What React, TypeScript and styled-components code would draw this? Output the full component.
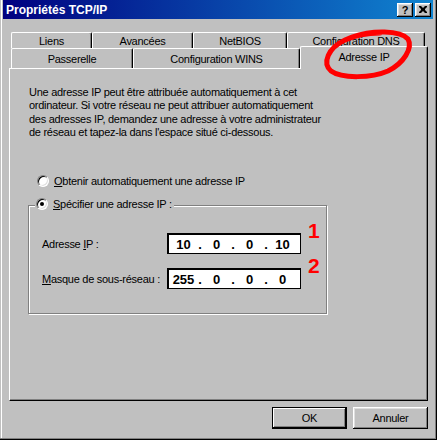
import React from 'react';
import styled, { createGlobalStyle } from 'styled-components';

const backTabs = [
  { label: 'Liens', w: 81 },
  { label: 'Avancées', w: 101 },
  { label: 'NetBIOS', w: 94 },
  { label: 'Configuration DNS', w: 138 },
];

const frontTabs = [
  { label: 'Passerelle', w: 122 },
  { label: 'Configuration WINS', w: 167 },
  { label: 'Adresse IP', w: 128, selected: true },
];

const fields = [
  { key: 'ip', label: 'Adresse ', mnemonic: 'I', rest: 'P :', parts: ['10', '0', '0', '10'], marker: '1' },
  { key: 'mask', label: '', mnemonic: 'M', rest: 'asque de sous-réseau :', parts: ['255', '0', '0', '0'], marker: '2' },
];

const App: React.FC = () => {
  return (
    <>
      <GlobalStyle />
      <Window>
        <TitleBar>
          <TitleText>Propriétés TCP/IP</TitleText>
          <CaptionButtons>
            <CaptionButton>?</CaptionButton>
            <CaptionButton>
              <svg width='8' height='7' viewBox='0 0 8 7'>
                <path d='M0 0h2l2 2 2-2h2v1l-2 2v1l2 2v1h-2l-2-2-2 2h-2v-1l2-2v-1l-2-2z' fill='#000' />
              </svg>
            </CaptionButton>
          </CaptionButtons>
        </TitleBar>

        <Body>
          <TabStrip>
            <BackRow>
              {backTabs.map((tab) => (
                <Tab key={tab.label} $w={tab.w}>
                  {tab.label}
                </Tab>
              ))}
            </BackRow>
            <FrontRow>
              {frontTabs.map((tab) =>
                tab.selected ? (
                  <SelectedTab key={tab.label} $w={tab.w}>
                    {tab.label}
                  </SelectedTab>
                ) : (
                  <FrontTab key={tab.label} $w={tab.w}>
                    {tab.label}
                  </FrontTab>
                ),
              )}
            </FrontRow>
          </TabStrip>

          <Panel>
            <Description>
              Une adresse IP peut être attribuée automatiquement à cet
              <br />
              ordinateur. Si votre réseau ne peut attribuer automatiquement
              <br />
              des adresses IP, demandez une adresse à votre administrateur
              <br />
              de réseau et tapez-la dans l'espace situé ci-dessous.
            </Description>

            <RadioRow>
              <Radio />
              <span>
                <u>O</u>btenir automatiquement une adresse IP
              </span>
            </RadioRow>

            <GroupBox>
              <Legend>
                <Radio $checked />
                <span>
                  <u>S</u>pécifier une adresse IP :
                </span>
              </Legend>
              <Fields>
                {fields.map((f) => (
                  <FieldRow key={f.key}>
                    <span>
                      {f.label}
                      <u>{f.mnemonic}</u>
                      {f.rest}
                    </span>
                    <IpBox>
                      {f.parts.map((p, i) => (
                        <React.Fragment key={i}>
                          {i > 0 && <IpDot>.</IpDot>}
                          <IpPart>{p}</IpPart>
                        </React.Fragment>
                      ))}
                    </IpBox>
                    <Marker>{f.marker}</Marker>
                  </FieldRow>
                ))}
              </Fields>
            </GroupBox>
          </Panel>

          <ButtonRow>
            <DialogButton $default>OK</DialogButton>
            <DialogButton>Annuler</DialogButton>
          </ButtonRow>
        </Body>

        {/* red hand-drawn loop around the selected tab */}
        <Scribble width='100' height='60' viewBox='318 26 100 60'>
          <path
            d='M352 37 C372 30 400 30 408 39 C413 48 404 63 388 71 C372 78 342 79 331 71 C322 63 328 48 345 40 C356 35 370 33 380 33'
            fill='none'
            stroke='#ff0000'
            strokeWidth='5'
            strokeLinecap='round'
          />
        </Scribble>
      </Window>
    </>
  );
};

export default App;

const GlobalStyle = createGlobalStyle`
  html, body {
    margin: 0;
    padding: 0;
    background: #c0c0c0;
  }
  body {
    font-family: "Liberation Sans", Arial, sans-serif;
    font-size: 11px;
    letter-spacing: -0.27px;
    color: #000;
  }
`;

const Window = styled.div`
  position: relative;
  width: 437px;
  height: 440px;
  box-sizing: border-box;
  padding: 0 4px 0 3px;
  background: #c0c0c0;
  overflow: hidden;
  box-shadow:
    inset -1px -1px #000,
    inset -2px -2px #808080,
    inset 1px 0 #c0c0c0,
    inset 2px 0 #fff;
`;

const TitleBar = styled.div`
  display: flex;
  align-items: center;
  height: 19px;
  padding: 0 2px 0 3px;
  background: linear-gradient(to right, #000080, #1084d0);
  color: #fff;
`;

const TitleText = styled.span`
  font-weight: bold;
  font-size: 12px;
  letter-spacing: 0;
`;

const CaptionButtons = styled.div`
  display: flex;
  gap: 2px;
  margin-left: auto;
`;

const CaptionButton = styled.div`
  display: flex;
  align-items: center;
  justify-content: center;
  width: 16px;
  height: 14px;
  box-sizing: border-box;
  background: #c0c0c0;
  color: #000;
  font-weight: bold;
  font-size: 11px;
  box-shadow:
    inset -1px -1px #000,
    inset 1px 1px #fff,
    inset -2px -2px #808080,
    inset 2px 2px #dfdfdf;
`;

const Body = styled.div`
  margin: 0 5px 0 6px;
`;

const TabStrip = styled.div`
  margin-top: 13px;
  padding-left: 2px;
`;

const BackRow = styled.div`
  display: flex;
  height: 16px;
`;

const FrontRow = styled.div`
  display: flex;
  align-items: flex-end;
  height: 20px;
`;

const Tab = styled.div<{ $w: number }>`
  display: flex;
  align-items: center;
  justify-content: center;
  width: ${(p) => p.$w}px;
  height: 16px;
  box-sizing: border-box;
  background: #c0c0c0;
  border-top: 1px solid #fff;
  border-left: 1px solid #fff;
  border-right: 1px solid #000;
  border-radius: 2px 2px 0 0;
  box-shadow: inset -1px 0 #808080;
`;

const FrontTab = styled(Tab)`
  height: 20px;
`;

const SelectedTab = styled(Tab)`
  position: relative;
  z-index: 1;
  height: 23px;
  margin-bottom: -1px;
  padding-bottom: 2px;
`;

const Panel = styled.div`
  height: 333px;
  box-sizing: border-box;
  padding: 17px 0 0 19px;
  border-top: 1px solid #fff;
  border-left: 1px solid #fff;
  border-right: 1px solid #000;
  border-bottom: 1px solid #000;
  box-shadow: inset -1px -1px #808080;
`;

const Description = styled.p`
  margin: 0;
  line-height: 13.3px;
  white-space: nowrap;
`;

const RadioRow = styled.div`
  display: flex;
  align-items: center;
  gap: 5px;
  height: 16px;
  margin: 34px 0 0 8px;
`;

const Radio = styled.span<{ $checked?: boolean }>`
  position: relative;
  flex: none;
  display: inline-block;
  width: 12px;
  height: 12px;
  box-sizing: border-box;
  border-radius: 50%;
  background: #fff;
  border: 1px solid;
  border-color: #808080 #fff #fff #808080;
  box-shadow:
    inset 1px 1px #000,
    inset -1px -1px #dfdfdf;

  &::after {
    content: '';
    display: ${(p) => (p.$checked ? 'block' : 'none')};
    position: absolute;
    left: 3px;
    top: 3px;
    width: 4px;
    height: 4px;
    border-radius: 50%;
    background: #000;
  }
`;

const GroupBox = styled.div`
  position: relative;
  width: 299px;
  height: 109px;
  box-sizing: border-box;
  margin: 16px 0 0 -1px;
  padding: 27px 0 0 13px;
  border: 1px solid #808080;
  box-shadow:
    1px 1px 0 #fff,
    inset 1px 1px 0 #fff;
`;

const Legend = styled.div`
  position: absolute;
  top: -10px;
  left: 6px;
  display: flex;
  align-items: center;
  gap: 5px;
  height: 16px;
  padding: 0 2px 0 1px;
  background: #c0c0c0;
`;

const Fields = styled.div`
  display: flex;
  flex-direction: column;
  gap: 14px;
`;

const FieldRow = styled.div`
  display: grid;
  grid-template-columns: 118px 134px 20px;
  column-gap: 7px;
  align-items: center;
  height: 21px;
`;

const IpBox = styled.div`
  display: flex;
  align-items: center;
  height: 21px;
  box-sizing: border-box;
  background: #fff;
  border: 1px solid #000;
  border-top-width: 2px;
  border-left-width: 2px;
  font-weight: bold;
  font-size: 13px;
  letter-spacing: 0;
`;

const IpPart = styled.span`
  width: 29px;
  text-align: center;
`;

const IpDot = styled.span`
  width: 4px;
  text-align: center;
`;

const Marker = styled.span`
  align-self: start;
  margin-top: -13px;
  color: #ff0000;
  font-weight: bold;
  font-size: 21px;
  line-height: 21px;
  letter-spacing: 0;
`;

const ButtonRow = styled.div`
  display: flex;
  justify-content: flex-end;
  gap: 6px;
  margin-top: 6px;
`;

const DialogButton = styled.div<{ $default?: boolean }>`
  display: flex;
  align-items: center;
  justify-content: center;
  width: 75px;
  height: 22px;
  box-sizing: border-box;
  background: #c0c0c0;
  box-shadow: ${(p) =>
    p.$default
      ? 'inset 0 0 0 1px #000, inset -2px -2px #000, inset 2px 2px #fff, inset -3px -3px #808080'
      : 'inset -1px -1px #000, inset 1px 1px #fff, inset -2px -2px #808080, inset 2px 2px #dfdfdf'};
`;

const Scribble = styled.svg`
  position: absolute;
  z-index: 2;
  left: 318px;
  top: 26px;
  pointer-events: none;
  overflow: visible;
`;
